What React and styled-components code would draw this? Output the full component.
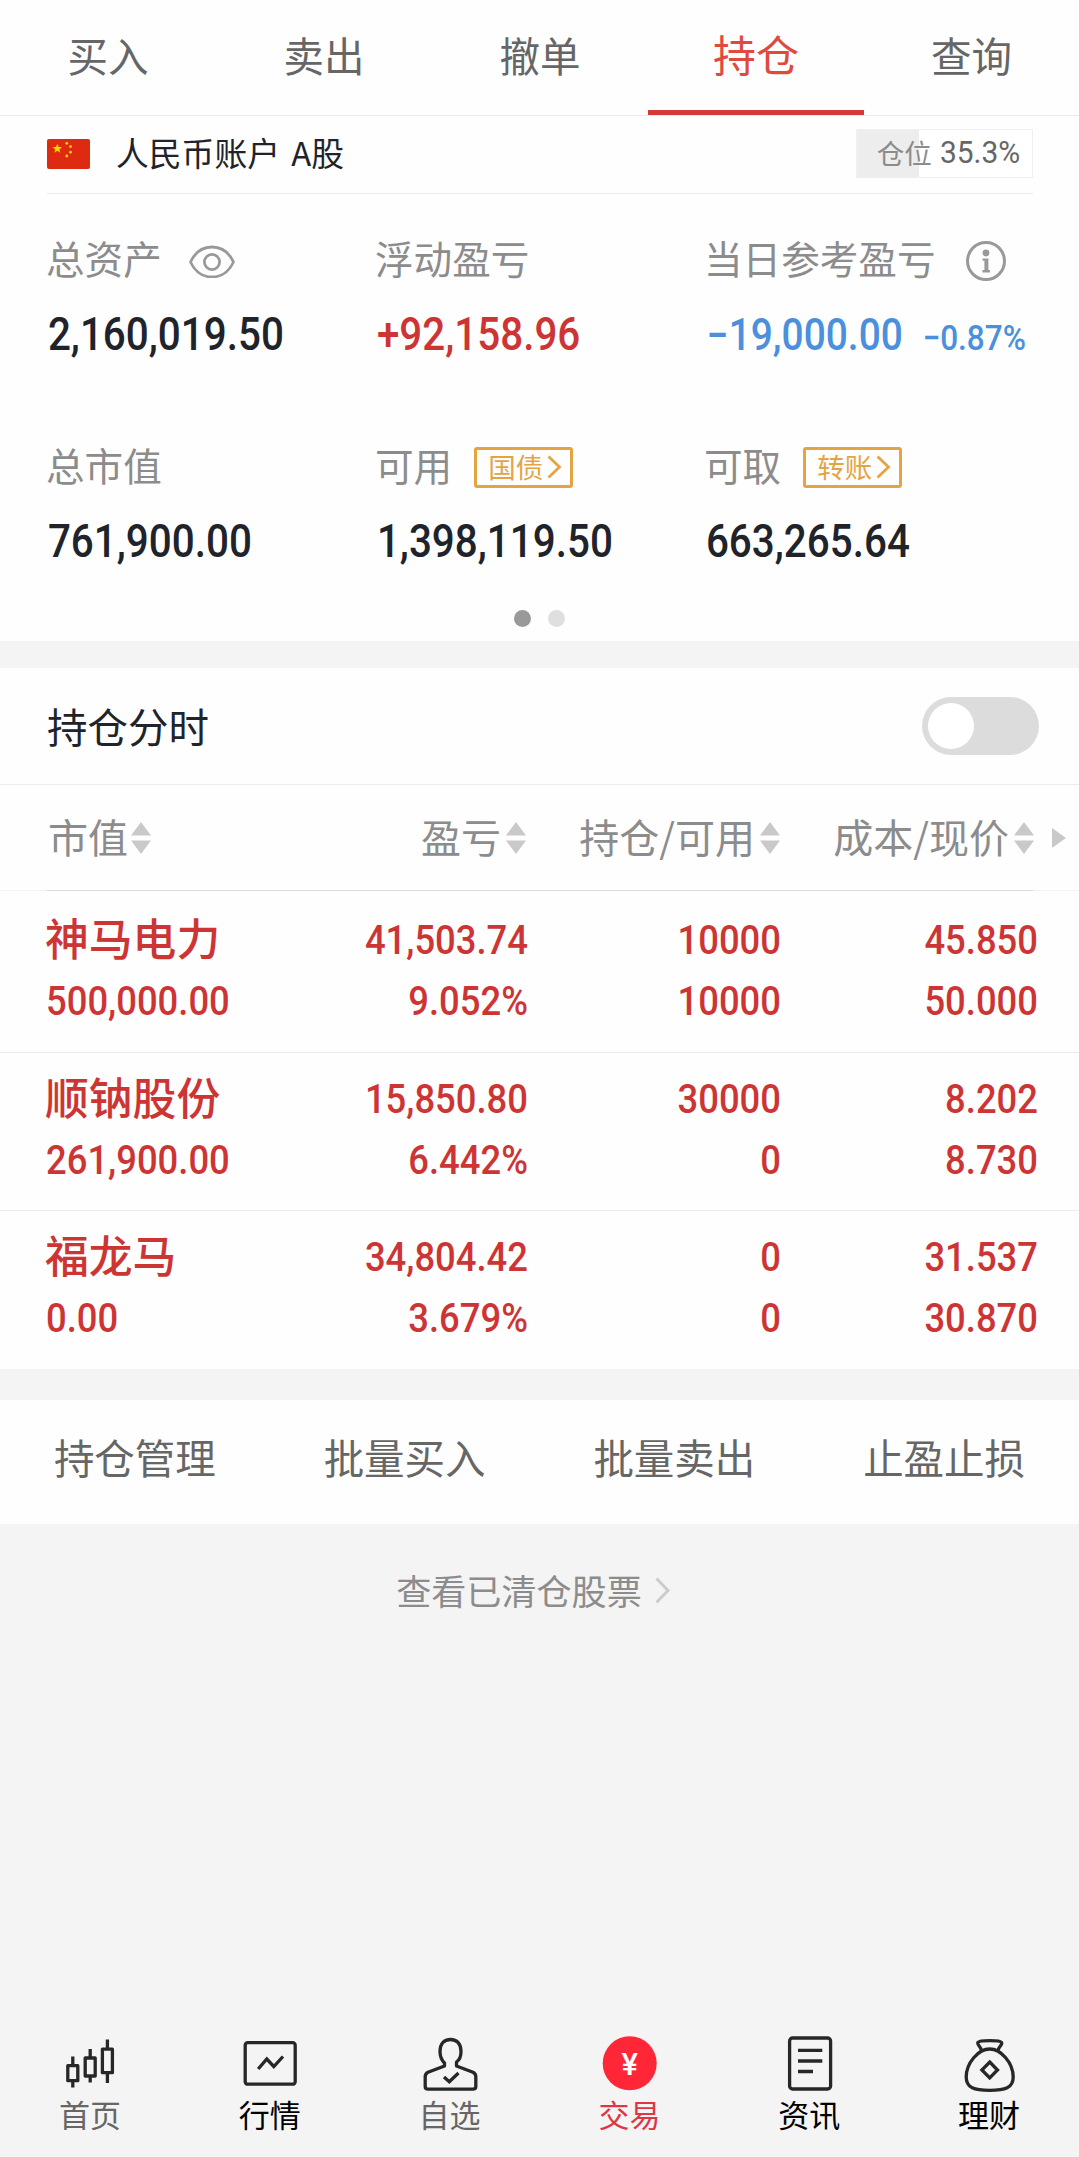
import React from 'react';
import styled, { createGlobalStyle, ThemeProvider } from 'styled-components';

const theme = {
  colors: {
    background: '#f4f4f4',
    panel: '#fefefe',
    line: '#ebebeb',
    text: '#20242a',
    textMuted: '#666',
    textLight: '#8c8c8c',
    red: '#cd3535',
    blue: '#4a90dc',
    gold: '#e5a444',
    disabled: '#dcdcdc',
    icon: '#272727',
  },
  fonts: {
    text: "'Noto Sans CJK SC', 'Noto Sans', sans-serif",
    number: "Roboto, 'Liberation Sans', sans-serif",
  },
};

const GlobalStyle = createGlobalStyle`
  *, *::before, *::after {
    box-sizing: border-box;
  }
  body {
    margin: 0;
    background-color: ${theme.colors.background};
    font-family: ${theme.fonts.text};
  }
`;

const StyledPage = styled.div`
  display: flex;
  flex-direction: column;
  min-height: 2157px;
  white-space: nowrap;
`;

const StyledPanel = styled.section`
  background-color: ${({ theme }) => theme.colors.panel};
  margin-bottom: ${({ $gap }) => $gap || 0}px;
`;

const StyledTabs = styled.nav`
  display: grid;
  grid-template-columns: repeat(4, 216px) 1fr;
  height: 116px;
  border-bottom: 1px solid ${({ theme }) => theme.colors.line};
`;

const StyledTab = styled.div`
  display: flex;
  align-items: center;
  justify-content: center;
  padding-bottom: ${({ $active }) => ($active ? 5 : 1)}px;
  border-bottom: 5px solid ${({ $active }) => ($active ? '#d63a38' : 'transparent')};
  color: ${({ $active, theme }) => ($active ? '#e04a3c' : theme.colors.textMuted)};
  font-size: ${({ $active }) => ($active ? 43 : 40.5)}px;
  line-height: 60px;
`;

const StyledAccount = styled.div`
  display: flex;
  align-items: center;
  height: 78px;
  margin: 0 46px 0 47px;
  padding-bottom: 2px;
  border-bottom: 1px solid ${({ theme }) => theme.colors.line};
`;

const StyledAccountName = styled.span`
  flex: 1;
  margin-left: 26px;
  padding-bottom: 3px;
  color: ${({ theme }) => theme.colors.text};
  font-size: 32.8px;
  line-height: 48px;
  word-spacing: 4px;
`;

const StyledPosition = styled.div`
  display: flex;
  align-items: center;
  justify-content: flex-end;
  width: 177px;
  height: 49px;
  padding-right: 12px;
  border: 1px solid #f0f0f0;
  background: linear-gradient(to right, #ededed ${({ $percent }) => $percent}%, #fff ${({ $percent }) => $percent}%);
  color: ${({ theme }) => theme.colors.textLight};
  font-size: 27.5px;
  line-height: 40px;
`;

const StyledPositionLabel = styled.span`
  padding-bottom: 4px;
`;

const StyledPositionValue = styled.span`
  margin-left: 5px;
  padding-bottom: 2px;
  color: ${({ theme }) => theme.colors.textMuted};
  font-family: ${({ theme }) => theme.fonts.number};
  font-size: 31px;
  transform: scaleX(0.965);
  transform-origin: right center;
`;

const StyledSummary = styled.div`
  display: grid;
  grid-template-columns: repeat(3, 329px);
  row-gap: 77px;
  padding: 41px 0 0 47px;
`;

const StyledSummaryLabel = styled.div`
  display: flex;
  align-items: center;
  height: 50px;
  margin: 0 0 20px -1px;
  color: ${({ theme }) => theme.colors.textLight};
  font-size: 38.6px;
  line-height: 50px;

  span {
    padding-bottom: 6px;
  }
  svg {
    margin-left: 27px;
  }
`;

const StyledNumber = styled.div`
  font-family: ${({ theme }) => theme.fonts.number};
  font-weight: 500;
  line-height: 63px;
  transform: scaleX(0.888);
  transform-origin: ${({ $align }) => $align || 'left'} center;
  text-align: ${({ $align }) => $align || 'left'};
`;

const StyledSummaryValue = styled(StyledNumber)`
  height: 60px;
  padding-left: ${({ $compact }) => ($compact ? 2 : 1)}px;
  color: ${({ $tone, theme }) => theme.colors[$tone]};
  font-size: ${({ $compact }) => ($compact ? 43.8 : 45.5)}px;
  line-height: 60px;

  small {
    margin-left: 22px;
    font-size: 35.5px;
    line-height: 1;
  }
`;

const StyledBadge = styled.div`
  display: flex;
  align-items: center;
  width: 99px;
  height: 41px;
  margin-left: 22px;
  padding-left: 11px;
  border: 3px solid ${({ theme }) => theme.colors.gold};
  border-radius: 3px;
  color: ${({ theme }) => theme.colors.gold};
  font-size: 27.5px;
  line-height: 34px;

  span {
    padding-bottom: 3px;
  }
  svg {
    margin-left: 4px;
  }
`;

const StyledDots = styled.div`
  display: flex;
  justify-content: center;
  gap: 17px;
  padding: 38px 0 14px;
`;

const StyledDot = styled.div`
  width: 17px;
  height: 17px;
  border-radius: 50%;
  background-color: ${({ $active }) => ($active ? '#999' : '#dfdfdf')};
`;

const StyledToggleRow = styled.div`
  display: flex;
  align-items: center;
  justify-content: space-between;
  height: 117px;
  padding: 0 40px 0 47px;
  border-bottom: 1px solid ${({ theme }) => theme.colors.line};
  color: ${({ theme }) => theme.colors.text};
  font-size: 40.5px;
  line-height: 60px;
`;

const StyledSwitch = styled.div`
  width: 117px;
  height: 58px;
  padding: 6px;
  border-radius: 29px;
  background-color: ${({ theme }) => theme.colors.disabled};

  &::before {
    content: '';
    display: block;
    width: 46px;
    height: 46px;
    border-radius: 50%;
    background-color: #fff;
  }
`;

const StyledTableHeader = styled.div`
  display: grid;
  grid-template-columns: 249px 230px 254px 256px auto;
  align-items: center;
  height: 105px;
  padding-left: 48px;
`;

const StyledHeaderCell = styled.div`
  display: flex;
  align-items: center;
  justify-content: ${({ $align }) => ($align === 'right' ? 'flex-end' : 'flex-start')};
  gap: ${({ $align }) => ($align === 'right' ? 5 : 3)}px;
  padding-right: ${({ $last }) => ($last ? 3 : 1)}px;
  color: ${({ theme }) => theme.colors.textLight};
  font-size: 40px;
  line-height: 60px;

  span {
    padding-bottom: 4px;
  }
`;

const StyledHeaderLine = styled.div`
  padding: 0 46px 0 47px;
  background-color: #f3f3f3;

  &::before {
    content: '';
    display: block;
    height: 1px;
    background-color: #dcdcdc;
  }
`;

const StyledRow = styled.div`
  display: grid;
  grid-template-columns: 252px 230px 253px 257px;
  grid-auto-rows: 61px;
  height: 158px;
  padding: 15px 0 0 46px;
  color: ${({ theme }) => theme.colors.red};
  font-size: 41px;

  &:not(:last-child) {
    border-bottom: 1px solid ${({ theme }) => theme.colors.line};
  }
  &:first-child {
    height: 162px;
    padding-top: 18px;
  }
`;

const StyledStockName = styled.div`
  margin-left: -1px;
  font-size: 43.8px;
  font-weight: 500;
  line-height: 56px;
`;

const StyledActions = styled.div`
  display: grid;
  grid-template-columns: repeat(4, 1fr);
  align-items: center;
  height: 124px;
  padding-bottom: 10px;
  color: ${({ theme }) => theme.colors.textMuted};
  font-size: 40.5px;
  line-height: 60px;
  text-align: center;
`;

const StyledHistoryLink = styled.div`
  display: flex;
  flex: 1;
  align-items: flex-start;
  justify-content: center;
  gap: 13px;
  padding-top: 41px;
  color: ${({ theme }) => theme.colors.textLight};
  font-size: 35.1px;
  line-height: 49px;
`;

const StyledBottomNav = styled.nav`
  display: grid;
  grid-template-columns: repeat(6, 1fr);
  padding-bottom: 22px;
`;

const StyledNavItem = styled.div`
  display: flex;
  flex-direction: column;
  align-items: center;
  color: ${({ $color }) => $color};
  font-size: 31px;
  line-height: 42px;
`;

const StyledNavIcon = styled.svg`
  width: 60px;
  height: 60px;
  fill: none;
  stroke: ${({ theme }) => theme.colors.icon};
  stroke-width: 3.3;
  stroke-linejoin: round;
`;

const STAR = '0,-5 1.3,-1.7 4.8,-1.6 2,0.6 3,4 0,2 -3,4 -2,0.6 -4.8,-1.6 -1.3,-1.7';

const FlagIcon = () => (
  <svg width="43" height="30" viewBox="0 0 43 30">
    <rect width="43" height="30" rx="2" fill="#de2a10" />
    <g fill="#ffd500">
      <polygon points={STAR} transform="translate(10.3 9.8)" />
      <circle cx="19.8" cy="4.3" r="1.4" />
      <circle cx="23.5" cy="7.6" r="1.4" />
      <circle cx="23.5" cy="13.2" r="1.4" />
      <circle cx="19.8" cy="17" r="1.4" />
    </g>
  </svg>
);

const EyeIcon = () => (
  <svg width="46" height="36" viewBox="0 0 46 36" fill="none" stroke="#999" strokeWidth="2.8">
    <path d="M1.5 20 C6 10.5 13.5 5 23 5 S40 10.5 44.5 20 C40 29.5 32.5 35 23 35 S6 29.5 1.5 20 Z" strokeLinejoin="round" />
    <circle cx="23" cy="20" r="7.6" />
  </svg>
);

const InfoIcon = () => (
  <svg width="44" height="42" viewBox="0 0 44 42">
    <circle cx="24" cy="22" r="18.5" fill="none" stroke="#999" strokeWidth="3" />
    <circle cx="24" cy="14" r="3.4" fill="#999" />
    <path d="M20.6 19.4 H26.4 V31 H28 V33.5 H20.4 V31 H22.4 V21.8 H20.6 Z" fill="#999" />
  </svg>
);

const BadgeArrow = () => (
  <svg width="16" height="24" viewBox="0 0 16 24" fill="none" stroke="currentColor" strokeWidth="2.8">
    <path d="M1.5 1.5 L12.5 12 L1.5 22.5" />
  </svg>
);

const SortIcon = () => (
  <svg width="20" height="32" viewBox="0 0 20 32" fill="#c9c9c9">
    <polygon points="10,0 20,13.5 0,13.5" />
    <polygon points="0,18.5 20,18.5 10,32" />
  </svg>
);

const MoreColumnsIcon = () => (
  <svg width="29" height="20" viewBox="0 0 29 20" fill="#c9c9c9">
    <polygon points="15,0 29,10 15,20" />
  </svg>
);

const LinkArrow = () => (
  <svg width="28" height="50" viewBox="0 0 28 50" fill="none" stroke="#ccc" strokeWidth="3">
    <path d="M1.5 13.5 L13 25.5 L1.5 37.5" />
  </svg>
);

const navIcons = {
  home: (
    <>
      <rect x="7.8" y="32.7" width="10" height="15" />
      <path d="M12.8 23.5 V32 M12.8 48 V54.5" />
      <rect x="25.2" y="25" width="10" height="18" />
      <path d="M30.2 16 V25 M30.2 43 V49.5" />
      <rect x="42.4" y="16.2" width="10" height="23.5" />
      <path d="M47.4 6.5 V16 M47.4 40 V50" />
    </>
  ),
  market: (
    <>
      <rect x="5.2" y="9.7" width="50" height="41.5" rx="2.5" />
      <path d="M18.2 36 L26.8 26 L33.8 33.5 L43 23.5" strokeLinejoin="miter" />
    </>
  ),
  watchlist: (
    <>
      <path d="M24.5 29 V33 L8 39.3 Q5.2 40.8 5.2 43.5 V53.5 Q5.2 56.2 8 56.2 H53 Q55.8 56.2 55.8 53.5 V43.5 Q55.8 40.8 53 39.3 L36.5 33 V29 C39.5 27 41 23.5 41 18.5 C41 11 37 6.5 30.5 6.5 S20 11 20 18.5 C20 23.5 21.5 27 24.5 30" />
      <path d="M24 44 L29.3 48.8 L38.5 40" strokeLinejoin="miter" />
    </>
  ),
  trade: (
    <>
      <circle cx="30.7" cy="30.3" r="27" fill="#ff2638" stroke="none" />
      <text x="30.7" y="42.3" fill="#fff" stroke="none" fontFamily="Roboto, sans-serif" fontSize="31" fontWeight="500" textAnchor="middle">
        ¥
      </text>
    </>
  ),
  news: (
    <>
      <rect x="10.6" y="5" width="41" height="51" rx="3" />
      <path d="M19 17.3 H43.3 M19 28 H43.3 M19 38.5 H34" />
    </>
  ),
  wealth: (
    <>
      <path d="M22.5 17.5 C22 13.5 17.5 11.5 19 9.3 C20.5 7 41 7 42.5 9.3 C44 11.5 39.5 13.5 39 17.5" />
      <path d="M30.7 16 C42 16 54.2 30 54.2 44 C54.2 55 46 57.3 30.7 57.3 S7.2 55 7.2 44 C7.2 30 19.4 16 30.7 16 Z" />
      <path d="M30.7 29 L38.5 37 L30.7 45 L22.9 37 Z" strokeLinejoin="miter" />
    </>
  ),
};

const tabs = ['买入', '卖出', '撤单', '持仓', '查询'];

const summary = [
  { label: '总资产', value: '2,160,019.50', tone: 'text', icon: <EyeIcon /> },
  { label: '浮动盈亏', value: '+92,158.96', tone: 'red' },
  { label: '当日参考盈亏', value: '−19,000.00', extra: '−0.87%', tone: 'blue', icon: <InfoIcon /> },
  { label: '总市值', value: '761,900.00', tone: 'text' },
  { label: '可用', value: '1,398,119.50', tone: 'text', badge: '国债' },
  { label: '可取', value: '663,265.64', tone: 'text', badge: '转账' },
];

const columns = ['市值', '盈亏', '持仓/可用', '成本/现价'];

const holdings = [
  {
    name: '神马电力',
    top: ['41,503.74', '10000', '45.850'],
    marketValue: '500,000.00',
    bottom: ['9.052%', '10000', '50.000'],
  },
  {
    name: '顺钠股份',
    top: ['15,850.80', '30000', '8.202'],
    marketValue: '261,900.00',
    bottom: ['6.442%', '0', '8.730'],
  },
  {
    name: '福龙马',
    top: ['34,804.42', '0', '31.537'],
    marketValue: '0.00',
    bottom: ['3.679%', '0', '30.870'],
  },
];

const actions = ['持仓管理', '批量买入', '批量卖出', '止盈止损'];

const navItems = [
  { label: '首页', icon: 'home', color: '#666' },
  { label: '行情', icon: 'market', color: '#000' },
  { label: '自选', icon: 'watchlist', color: '#666' },
  { label: '交易', icon: 'trade', color: '#e03545' },
  { label: '资讯', icon: 'news', color: '#000' },
  { label: '理财', icon: 'wealth', color: '#000' },
];

const SummaryItem = ({ item }) => (
  <div>
    <StyledSummaryLabel>
      <span>{item.label}</span>
      {item.icon}
      {item.badge && (
        <StyledBadge>
          <span>{item.badge}</span>
          <BadgeArrow />
        </StyledBadge>
      )}
    </StyledSummaryLabel>
    <StyledSummaryValue $tone={item.tone} $compact={Boolean(item.extra)}>
      {item.value}
      {item.extra && <small>{item.extra}</small>}
    </StyledSummaryValue>
  </div>
);

const HoldingRow = ({ item }) => (
  <StyledRow>
    <StyledStockName>{item.name}</StyledStockName>
    {item.top.map((value, index) => (
      <StyledNumber key={columns[index + 1]} $align="right">
        {value}
      </StyledNumber>
    ))}
    <StyledNumber>{item.marketValue}</StyledNumber>
    {item.bottom.map((value, index) => (
      <StyledNumber key={columns[index + 1]} $align="right">
        {value}
      </StyledNumber>
    ))}
  </StyledRow>
);

const App = () => (
  <ThemeProvider theme={theme}>
    <GlobalStyle />
    <StyledPage>
      <StyledPanel $gap={27}>
        <StyledTabs>
          {tabs.map((tab) => (
            <StyledTab key={tab} $active={tab === '持仓'}>
              {tab}
            </StyledTab>
          ))}
        </StyledTabs>
        <StyledAccount>
          <FlagIcon />
          <StyledAccountName>人民币账户 A股</StyledAccountName>
          <StyledPosition $percent={35.3}>
            <StyledPositionLabel>仓位</StyledPositionLabel>
            <StyledPositionValue>35.3%</StyledPositionValue>
          </StyledPosition>
        </StyledAccount>
        <StyledSummary>
          {summary.map((item) => (
            <SummaryItem key={item.label} item={item} />
          ))}
        </StyledSummary>
        <StyledDots>
          <StyledDot $active />
          <StyledDot />
        </StyledDots>
      </StyledPanel>

      <StyledPanel $gap={31}>
        <StyledToggleRow>
          持仓分时
          <StyledSwitch role="switch" aria-checked="false" />
        </StyledToggleRow>
        <StyledTableHeader>
          {columns.map((column, index) => (
            <StyledHeaderCell
              key={column}
              $align={index > 0 ? 'right' : 'left'}
              $last={index === columns.length - 1}
            >
              <span>{column}</span>
              <SortIcon />
            </StyledHeaderCell>
          ))}
          <MoreColumnsIcon />
        </StyledTableHeader>
        <StyledHeaderLine />
        <div>
          {holdings.map((item) => (
            <HoldingRow key={item.name} item={item} />
          ))}
        </div>
      </StyledPanel>

      <StyledPanel>
        <StyledActions>
          {actions.map((action) => (
            <div key={action}>{action}</div>
          ))}
        </StyledActions>
      </StyledPanel>

      <StyledHistoryLink>
        查看已清仓股票
        <LinkArrow />
      </StyledHistoryLink>

      <StyledBottomNav>
        {navItems.map((item) => (
          <StyledNavItem key={item.label} $color={item.color}>
            <StyledNavIcon viewBox="0 0 60 60">{navIcons[item.icon]}</StyledNavIcon>
            {item.label}
          </StyledNavItem>
        ))}
      </StyledBottomNav>
    </StyledPage>
  </ThemeProvider>
);

export default App;
